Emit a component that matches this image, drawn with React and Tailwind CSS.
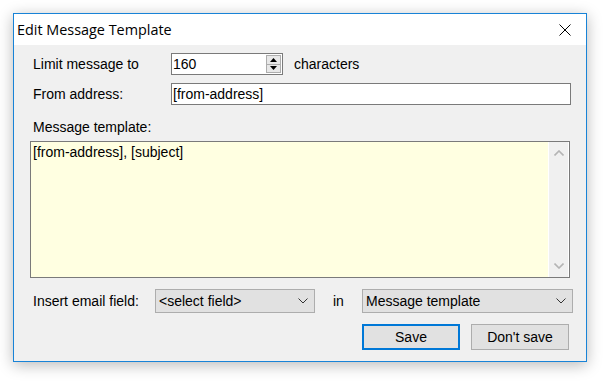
import React from "react";

function Chevron({ className = "", dir = "down", w = 1 }) {
  return (
    <svg width="10" height="6" viewBox="0 0 10 6" className={className}>
      {dir === "down" ? (
        <polyline points="0.5,0.5 5,5 9.5,0.5" fill="none" stroke="currentColor" strokeWidth={w} />
      ) : (
        <polyline points="0.5,5.5 5,1 9.5,5.5" fill="none" stroke="currentColor" strokeWidth={w} />
      )}
    </svg>
  );
}

function Select({ text, className = "" }) {
  return (
    <div className={`h-[24px] bg-[#e1e1e1] border border-[#adadad] flex items-center pl-[3px] pr-[6px] ${className}`}>
      <span className="flex-1 leading-none">{text}</span>
      <Chevron className="text-[#333]" />
    </div>
  );
}

export default function App() {
  return (
    <div
      className="w-[604px] h-[381px] bg-white pl-[13px] pt-[13px] text-[14px] text-black"
      style={{ fontFamily: '"Liberation Sans", Arial, sans-serif' }}
    >
      <div className="w-[574px] h-[349px] border border-[#1883d7] bg-[#f0f0f0] flex flex-col shadow-[0_3px_14px_rgba(0,0,0,0.28)]">
        {/* title bar */}
        <div className="h-[31px] bg-white flex items-center pl-[3px] pr-[15px] shrink-0">
          <span className="flex-1 text-[14.4px] leading-none pt-[1px]" style={{ fontFamily: '"Open Sans", "Noto Sans", sans-serif' }}>
            Edit Message Template
          </span>
          <svg width="12" height="12" viewBox="0 0 12 12">
            <path d="M0.5 0.5 L11.5 11.5 M11.5 0.5 L0.5 11.5" stroke="#000" strokeWidth="1" />
          </svg>
        </div>

        {/* body */}
        <div className="flex flex-col pl-[16px] pr-[13px]">
          {/* row 1 */}
          <div className="flex items-center mt-[8px] h-[22px]">
            <span className="w-[141px] pl-[3px]">Limit message to</span>
            <div className="w-[112px] h-[22px] border border-[#7a7a7a] bg-white flex items-center">
              <span className="flex-1 pl-[1px] leading-none">160</span>
              <div className="flex flex-col w-[15px] h-[18px] mr-[1px] border border-[#adadad]">
                <div className="flex-1 bg-[#e8e8e8] flex items-center justify-center border-b border-[#adadad]">
                  <svg width="7" height="4" viewBox="0 0 7 4"><polygon points="0,4 3.5,0 7,4" fill="#000" /></svg>
                </div>
                <div className="flex-1 bg-[#e8e8e8] flex items-center justify-center">
                  <svg width="7" height="4" viewBox="0 0 7 4"><polygon points="0,0 3.5,4 7,0" fill="#000" /></svg>
                </div>
              </div>
            </div>
            <span className="ml-[11px]">characters</span>
          </div>

          {/* row 2 */}
          <div className="flex items-center mt-[8px] h-[22px]">
            <span className="w-[141px] pl-[3px]">From address:</span>
            <div className="flex-1 h-[22px] border border-[#7a7a7a] bg-white flex items-center mr-[2px]">
              <span className="pl-[1px] leading-none">[from-address]</span>
            </div>
          </div>

          {/* label */}
          <div className="mt-[14px] pl-[3px] leading-[16px]">Message template:</div>

          {/* textarea */}
          <div className="mt-[6px] w-[540px] h-[137px] border border-[#7a7a7a] bg-[#ffffe1] flex">
            <div className="flex-1 pl-[2px] pt-[2px] leading-[16px]">[from-address], [subject]</div>
            <div className="w-[1px] bg-white" />
            <div className="w-[19px] bg-[#f0f0f0] flex flex-col items-center justify-between py-[8px]">
              <Chevron dir="up" w={1.6} className="text-[#b4b4b4]" />
              <Chevron dir="down" w={1.6} className="text-[#b4b4b4]" />
            </div>
            <div className="w-[1px] bg-white" />
          </div>

          {/* insert row */}
          <div className="flex items-center mt-[11px] h-[24px]">
            <span className="w-[125px] pl-[3px]">Insert email field:</span>
            <Select text="<select field>" className="w-[160px]" />
            <span className="w-[47px] pl-[18px]">in</span>
            <Select text="Message template" className="w-[211px]" />
          </div>

          {/* buttons */}
          <div className="flex justify-end mt-[11px] pr-[4px] gap-[11px]">
            <button className="w-[98px] h-[26px] bg-[#e1e1e1] border-2 border-[#0078d7] leading-none">Save</button>
            <button className="w-[98px] h-[26px] bg-[#e1e1e1] border border-[#adadad] leading-none">Don't save</button>
          </div>
        </div>
      </div>
    </div>
  );
}
